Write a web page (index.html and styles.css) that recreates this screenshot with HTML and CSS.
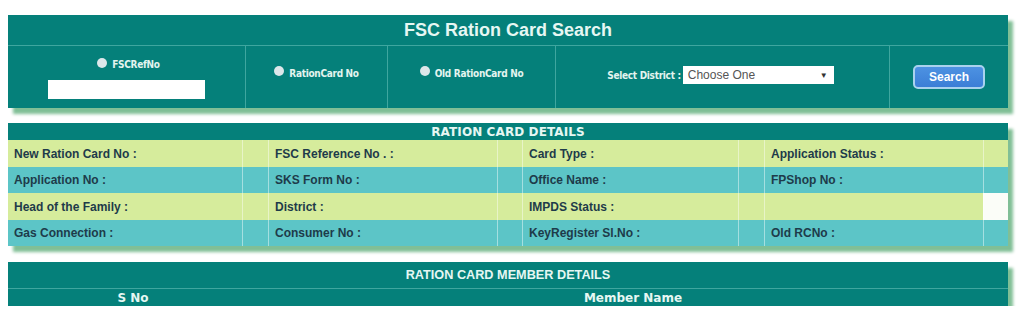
FILE: index.html
```html
<!DOCTYPE html>
<html>
<head>
<meta charset="utf-8">
<link rel="stylesheet" href="styles.css">
</head>
<body>
<div class="page">
  <section class="panel search">
    <div class="title">FSC Ration Card Search</div>
    <div class="search-row">
      <div class="cell c1">
        <label class="radio"><span class="dot"></span>FSCRefNo</label>
        <div class="textbox"></div>
      </div>
      <div class="cell c2"><label class="radio"><span class="dot"></span>RationCard No</label></div>
      <div class="cell c3"><label class="radio"><span class="dot"></span>Old RationCard No</label></div>
      <div class="cell c4">
        <span class="sel-label">Select District :</span>
        <div class="select"><span>Choose One</span><span class="arrow">&#9660;</span></div>
      </div>
      <div class="cell c5"><button class="btn">Search</button></div>
    </div>
  </section>

  <section class="panel details">
    <div class="dhead">RATION CARD DETAILS</div>
    <div class="grid">
      <div class="row y"><div>New Ration Card No :</div><div></div><div>FSC Reference No . :</div><div></div><div>Card Type :</div><div></div><div>Application Status :</div><div></div></div>
      <div class="row t"><div>Application No :</div><div></div><div>SKS Form No :</div><div></div><div>Office Name :</div><div></div><div>FPShop No :</div><div></div></div>
      <div class="row y"><div>Head of the Family :</div><div></div><div>District :</div><div></div><div>IMPDS Status :</div><div></div><div></div><div class="white"></div></div>
      <div class="row t"><div>Gas Connection :</div><div></div><div>Consumer No :</div><div></div><div>KeyRegister Sl.No :</div><div></div><div>Old RCNo :</div><div></div></div>
    </div>
  </section>

  <section class="panel members">
    <div class="mhead">RATION CARD MEMBER DETAILS</div>
    <div class="mrow"><div>S No</div><div>Member Name</div></div>
  </section>
</div>
</body>
</html>
```

FILE: styles.css
```css
* { box-sizing: border-box; }
html, body { margin: 0; padding: 0; background: #ffffff; }
body { font-family: "Liberation Sans", Arial, sans-serif; }
.page {
  width: 1024px;
  padding: 15px 16px 0 8px;
  display: flex;
  flex-direction: column;
  gap: 15px;
}
.panel {
  width: 1000px;
  background: #05807a;
  box-shadow: 5px 6px 3px #80bf96;
}
.members { margin-top: 1px; }
.title {
  height: 31px;
  display: flex;
  align-items: center;
  justify-content: center;
  color: #e6f7f3;
  font-weight: bold;
  font-size: 18px;
  border-bottom: 1px solid #3fa69f;
}
.search-row {
  display: grid;
  grid-template-columns: 237px 142px 168px 334px 119px;
  height: 62px;
}
.cell {
  border-left: 1px solid #3fa69f;
  display: flex;
  align-items: center;
  justify-content: center;
  padding-bottom: 8px;
}
.cell.c1 { border-left: none; flex-direction: column; gap: 10px; padding: 4px 0 0 0; }
.cell.c4 { padding-bottom: 4px; }
.cell.c5 { padding-bottom: 0; }
.radio {
  display: flex;
  align-items: center;
  gap: 5px;
  color: #e3f4ef;
  font-weight: bold;
  font-size: 10px;
  font-family: "DejaVu Sans Condensed", "DejaVu Sans", sans-serif;
  letter-spacing: -0.3px;
}
.c1 .radio { margin-left: 4px; }
.dot {
  width: 10px; height: 10px; border-radius: 50%;
  background: #dde7ea;
  margin-top: -4px;
}
.textbox {
  width: 157px; height: 19px; background: #ffffff;
}
.sel-label {
  color: #e3f4ef;
  font-weight: bold;
  font-size: 10px;
  font-family: "DejaVu Sans Condensed", "DejaVu Sans", sans-serif;
  letter-spacing: -0.3px;
  margin-right: 2px;
}
.select {
  width: 151px; height: 18px; background: #ffffff;
  display: flex; align-items: center; justify-content: space-between;
  padding: 0 6px 0 5px;
  font-size: 12px; color: #555;
  font-family: "Liberation Sans", Arial, sans-serif;
  margin-right: 4px;
}
.select .arrow { font-size: 8px; color: #333; }
.btn {
  width: 72px; height: 24px;
  border-radius: 5px;
  border: 2px solid #a9d2ee;
  background: linear-gradient(#4d92e2, #3b7ed6);
  color: #ffffff;
  font-weight: bold;
  font-size: 12px;
  font-family: "Liberation Sans", Arial, sans-serif;
  padding: 0;
}
.dhead {
  height: 17px;
  display: flex; align-items: center; justify-content: center;
  color: #e6f7f3;
  font-weight: bold;
  font-size: 12px;
  font-family: "DejaVu Sans", sans-serif;
  letter-spacing: 0.1px;
}
.row {
  display: grid;
  grid-template-columns: 234px 26px 229px 25px 216px 26px 219px 25px;
  height: 26.5px;
}
.row.y { background: #d6ec9c; }
.row.t { background: #5cc5c7; }
.row > div {
  border-left: 1px solid rgba(255,255,255,0.45);
  padding-left: 6px;
  padding-top: 1px;
  display: flex; align-items: center;
  font-weight: bold;
  font-size: 12px;
  color: #1e3b4a;
}
.row > div:first-child { border-left: none; }
.row > div.white { background: #fbfdf8; }
.mhead {
  height: 27px;
  display: flex; align-items: center; justify-content: center;
  color: #e6f7f3;
  font-weight: bold;
  font-size: 12.7px;
  border-bottom: 1px solid #3fa69f;
}
.mrow {
  display: grid;
  grid-template-columns: 250px 750px;
  height: 17px;
}
.mrow > div {
  display: flex; align-items: center; justify-content: center;
  color: #e6f7f3;
  font-weight: bold;
  font-size: 12px;
  font-family: "DejaVu Sans", sans-serif;
}
```
